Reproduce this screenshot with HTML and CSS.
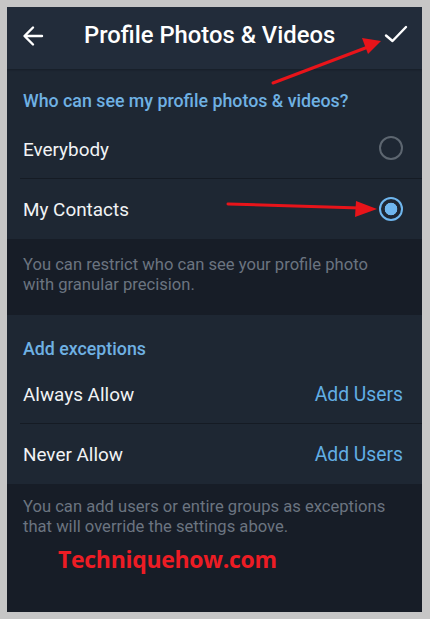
FILE: index.html
```html
<!DOCTYPE html>
<html>
<head>
<meta charset="utf-8">
<link rel="stylesheet" href="styles.css">
</head>
<body>
<div class="frame">
  <div class="screen">
    <header class="topbar">
      <svg class="icon back" width="24" height="24" viewBox="0 0 24 24"><path d="M21 12H4M12 3.5L3.5 12L12 20.5" fill="none" stroke="#fff" stroke-width="2.4" stroke-linecap="round" stroke-linejoin="round"/></svg>
      <div class="title">Profile Photos &amp; Videos</div>
      <svg class="icon check" width="26" height="24" viewBox="0 0 26 24"><path d="M4 13.5L10.5 19L24 5" fill="none" stroke="#fff" stroke-width="2.4" stroke-linecap="round" stroke-linejoin="round"/></svg>
    </header>

    <section class="group">
      <div class="group-title">Who can see my profile photos &amp; videos?</div>
      <div class="row">
        <span class="label">Everybody</span>
        <span class="radio"></span>
      </div>
      <div class="row">
        <span class="label">My Contacts</span>
        <span class="radio on"></span>
      </div>
    </section>

    <div class="hint first">You can restrict who can see your profile photo<br>with granular precision.</div>

    <section class="group">
      <div class="group-title second">Add exceptions</div>
      <div class="row">
        <span class="label">Always Allow</span>
        <span class="action">Add Users</span>
      </div>
      <div class="row">
        <span class="label">Never Allow</span>
        <span class="action">Add Users</span>
      </div>
    </section>

    <div class="hint last">
      <div>You can add users or entire groups as exceptions<br>that will override the settings above.</div>
      <div class="watermark">Techniquehow.com</div>
    </div>
  </div>

  <svg class="arrows" width="430" height="619" viewBox="0 0 430 619">
    <line x1="273" y1="83" x2="368" y2="47" stroke="#e8141a" stroke-width="3" stroke-linecap="round"/>
    <polygon points="381,41 362,38 368,54" fill="#e8141a"/>
    <line x1="228" y1="204" x2="360" y2="208" stroke="#e8141a" stroke-width="3" stroke-linecap="round"/>
    <polygon points="377,209 356,201 355,217" fill="#e8141a"/>
  </svg>
</div>
</body>
</html>
```

FILE: styles.css
```css
html, body {
  margin: 0;
  padding: 0;
  background: #c6c6c6;
}
.frame {
  position: relative;
  width: 430px;
  height: 619px;
  padding: 7px 8px 7px 7px;
  box-sizing: border-box;
}
.screen {
  height: 605px;
  display: flex;
  flex-direction: column;
  background: #171d27;
  font-family: Roboto, "Noto Sans", sans-serif;
  overflow: hidden;
}
.topbar {
  height: 62px;
  flex: none;
  background: #222c3a;
  display: flex;
  align-items: center;
  padding: 0 0 0 14px;
  box-shadow: 0 1px 2px rgba(0,0,0,0.25);
  position: relative;
  z-index: 1;
}
.icon { display: block; flex: none; }
.back { margin-top: -4px; }
.title {
  flex: 1;
  color: #ffffff;
  font-size: 23.8px;
  font-weight: 500;
  margin-left: 39px;
  margin-top: -6px;
}
.check { margin-right: 14px; margin-top: -8px; }
.group {
  background: #1e2733;
  flex: none;
}
.group-title {
  height: 50px;
  box-sizing: border-box;
  padding: 22px 16px 0 16px;
  line-height: 20px;
  color: #6fb1e3;
  font-size: 17.8px;
  font-weight: 500;
}
.group-title.second {
  height: 49px;
  padding-top: 24px;
}
.row {
  height: 60px;
  display: flex;
  align-items: center;
  justify-content: space-between;
  padding: 0 18px 0 16px;
  position: relative;
}
.row + .row::before {
  content: "";
  position: absolute;
  left: 13px;
  right: 0;
  top: -1px;
  height: 1px;
  background: #151b24;
}
.label {
  color: #f1f3f5;
  font-size: 18.9px;
}
.radio {
  width: 24px;
  height: 24px;
  border-radius: 50%;
  border: 2px solid #5d6670;
  box-sizing: border-box;
  margin-right: 1px;
  margin-top: -2px;
}
.radio.on {
  margin-top: 0;
  border: 2.5px solid #6fb6ee;
  background: radial-gradient(circle, #6fb6ee 0 6px, #1e2733 6.6px);
}
.action {
  color: #62aee4;
  font-size: 19.3px;
  margin-right: 1px;
}
.hint {
  color: #6b7480;
  font-size: 16.6px;
  line-height: 20px;
  padding: 0 16px;
  flex: none;
  white-space: nowrap;
}
.hint.first {
  height: 76px;
  box-sizing: border-box;
  padding-top: 16px;
}
.hint.last {
  flex: 1;
  padding-top: 13px;
}
.watermark {
  color: #ed1c24;
  font-family: "Open Sans", "Noto Sans", sans-serif;
  font-weight: 700;
  font-size: 23px;
  line-height: 30px;
  margin: 7px 0 0 35px;
  letter-spacing: -0.3px;
}
.arrows {
  position: absolute;
  left: 0;
  top: 0;
  z-index: 2;
  pointer-events: none;
}
```
